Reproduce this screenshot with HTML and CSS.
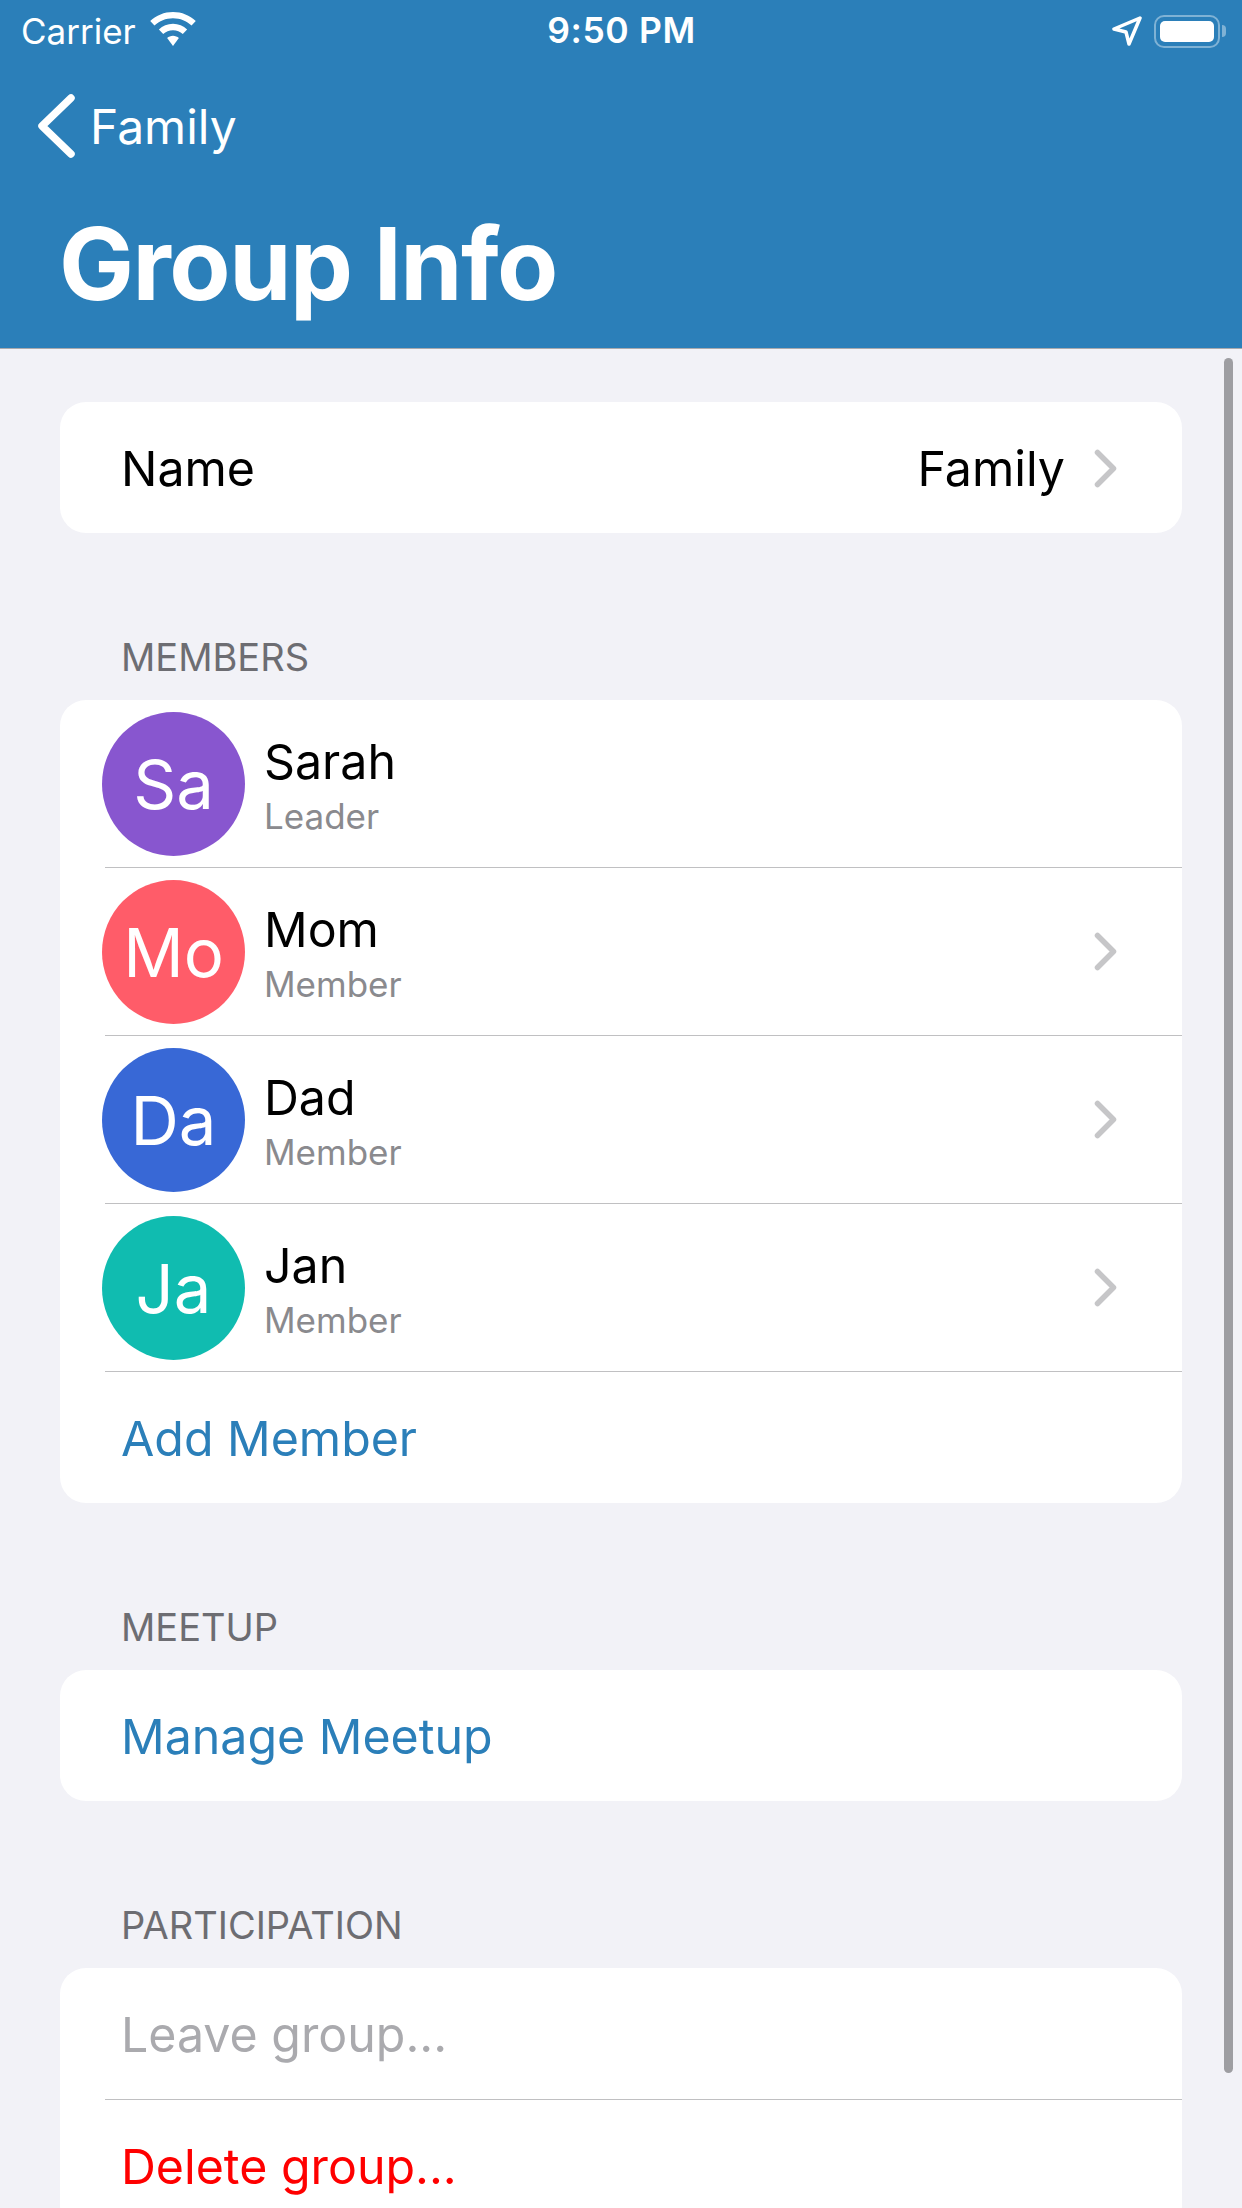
FILE: index.html
```html
<!DOCTYPE html>
<html lang="en">

<head>
    <meta charset="UTF-8">
    <meta name="viewport" content="width=device-width, initial-scale=1.0">
    <title>Group Info</title>
    <link rel="stylesheet" href="styles.css">
</head>

<body>
    <header class="header">
        <div class="status-bar">
            <div class="status-left">
                <span>Carrier</span>
                <svg class="wifi" viewBox="0 0 46 33" width="48" height="34">
                    <path d="M23 0C14.500 0 6.700 3.300 0.900 8.700L5 13.100C9.700 8.800 16 6.100 23 6.100S36.300 8.800 41 13.100L45.100 8.700C39.300 3.300 31.500 0 23 0Z" fill="#fff"/>
                    <path d="M23 11.500C17.700 11.500 12.900 13.600 9.300 16.900L13.500 21.400C16 19.100 19.300 17.700 23 17.700S30 19.100 32.500 21.400L36.700 16.900C33.100 13.600 28.300 11.500 23 11.500Z" fill="#fff"/>
                    <path d="M23 23C20.800 23 18.800 23.900 17.300 25.200L23 33L28.700 25.200C27.200 23.900 25.200 23 23 23Z" fill="#fff"/>
                </svg>
            </div>
            <span class="clock">9:50 PM</span>
            <div class="status-right">
                <svg class="arrow" viewBox="0 0 30 30" width="30" height="30">
                    <path d="M28 2L2 13L14 16L17 28Z" fill="none" stroke="#fff" stroke-width="3.500" stroke-linejoin="round"/>
                </svg>
                <div class="battery"><div class="battery-fill"></div></div>
                <div class="battery-nub"></div>
            </div>
        </div>
        <div class="nav-row">
            <svg class="back" viewBox="0 0 38 64" width="38" height="64">
                <path d="M34 4L5 32L34 60" fill="none" stroke="#fff" stroke-width="7.500" stroke-linecap="round" stroke-linejoin="round"/>
            </svg>
            <span>Family</span>
        </div>
        <h1 class="title">Group Info</h1>
    </header>

    <main class="content">
        <section class="card">
            <div class="row">
                <span class="row-text">Name</span>
                <span class="row-value">Family</span>
                <svg class="chevron" viewBox="0 0 23 39" width="23" height="39"><path d="M3.500 3.500L19.500 19.500L3.500 35.500" fill="none" stroke="#c6c6c8" stroke-width="5.500" stroke-linecap="round" stroke-linejoin="round"/></svg>
            </div>
        </section>

        <h2 class="section-label">MEMBERS</h2>
        <section class="card">
            <div class="member">
                <div class="avatar purple">Sa</div>
                <div class="member-info">
                    <div class="member-name">Sarah</div>
                    <div class="member-role">Leader</div>
                </div>
            </div>
            <div class="sep"></div>
            <div class="member">
                <div class="avatar red">Mo</div>
                <div class="member-info">
                    <div class="member-name">Mom</div>
                    <div class="member-role">Member</div>
                </div>
                <svg class="chevron" viewBox="0 0 23 39" width="23" height="39"><path d="M3.500 3.500L19.500 19.500L3.500 35.500" fill="none" stroke="#c6c6c8" stroke-width="5.500" stroke-linecap="round" stroke-linejoin="round"/></svg>
            </div>
            <div class="sep"></div>
            <div class="member">
                <div class="avatar blue">Da</div>
                <div class="member-info">
                    <div class="member-name">Dad</div>
                    <div class="member-role">Member</div>
                </div>
                <svg class="chevron" viewBox="0 0 23 39" width="23" height="39"><path d="M3.500 3.500L19.500 19.500L3.500 35.500" fill="none" stroke="#c6c6c8" stroke-width="5.500" stroke-linecap="round" stroke-linejoin="round"/></svg>
            </div>
            <div class="sep"></div>
            <div class="member">
                <div class="avatar teal">Ja</div>
                <div class="member-info">
                    <div class="member-name">Jan</div>
                    <div class="member-role">Member</div>
                </div>
                <svg class="chevron" viewBox="0 0 23 39" width="23" height="39"><path d="M3.500 3.500L19.500 19.500L3.500 35.500" fill="none" stroke="#c6c6c8" stroke-width="5.500" stroke-linecap="round" stroke-linejoin="round"/></svg>
            </div>
            <div class="sep"></div>
            <div class="row"><span class="row-text link">Add Member</span></div>
        </section>

        <h2 class="section-label">MEETUP</h2>
        <section class="card">
            <div class="row"><span class="row-text link">Manage Meetup</span></div>
        </section>

        <h2 class="section-label">PARTICIPATION</h2>
        <section class="card">
            <div class="row"><span class="row-text muted">Leave group...</span></div>
            <div class="sep"></div>
            <div class="row"><span class="row-text danger">Delete group...</span></div>
        </section>
    </main>

    <div class="scrollbar"></div>
</body>

</html>
```

FILE: styles.css
```css
/* Basic body styling */
body {
    font-family: Inter, "Noto Sans", sans-serif;
    width: 1242px;
    height: 2208px;
    margin: 0;
    overflow: hidden;
    position: relative;
    background-color: #f2f2f7;
    color: #000;
}

/* Blue header */
.header {
    height: 348px;
    background-color: #2b7fb9;
    border-bottom: 1px solid #a9a9ad;
    color: #fff;
}

.status-bar {
    height: 62px;
    padding: 0 16px 0 21px;
    display: flex;
    align-items: center;
    justify-content: space-between;
    font-size: 35px;
    line-height: 62px;
}

.status-left {
    width: 296px;
    display: flex;
    align-items: center;
    gap: 13px;
}

.wifi {
    margin-top: -4px;
}

.clock {
    font-weight: 600;
    font-size: 35.500px;
    letter-spacing: 0.600px;
}

.status-right {
    width: 300px;
    display: flex;
    align-items: center;
    justify-content: flex-end;
}

.arrow {
    margin-right: 12px;
}

.battery {
    width: 66px;
    height: 33px;
    box-sizing: border-box;
    padding: 4px;
    border: 2px solid rgba(255, 255, 255, 0.4);
    border-radius: 10px;
}

.battery-fill {
    height: 100%;
    background-color: #fff;
    border-radius: 5px;
}

.battery-nub {
    width: 4px;
    height: 12px;
    margin-left: 2px;
    background-color: rgba(255, 255, 255, 0.4);
    border-radius: 0 4px 4px 0;
}

.nav-row {
    height: 128px;
    padding-left: 37px;
    display: flex;
    align-items: center;
    gap: 15px;
    font-size: 48px;
}

.title {
    margin: 0;
    padding: 16px 0 0 59px;
    font-size: 100px;
    font-weight: 700;
    line-height: 116px;
    letter-spacing: -1.500px;
}

/* Scrolling list */
.content {
    padding-top: 53px;
}

.card {
    margin: 0 60px;
    background-color: #fff;
    border-radius: 26px;
    overflow: hidden;
}

.section-label {
    height: 167px;
    box-sizing: border-box;
    margin: 0;
    padding: 102px 0 0 121px;
    font-size: 38px;
    font-weight: 400;
    line-height: 44px;
    color: #6d6d72;
}

.row {
    height: 131px;
    box-sizing: border-box;
    padding: 2px 65px 0 61px;
    display: flex;
    align-items: center;
    font-size: 48.300px;
}

.row-text {
    flex: 1;
}

.row-value {
    margin-right: 29px;
}

.link {
    color: #2b7fb9;
}

.muted {
    color: #aaaaae;
}

.danger {
    color: #ff0000;
}

.sep {
    height: 1px;
    margin-left: 45px;
    background-color: #c0c0c2;
}

/* Member rows */
.member {
    height: 167px;
    padding: 0 65px 0 42px;
    display: flex;
    align-items: center;
}

.avatar {
    width: 143px;
    height: 144px;
    box-sizing: border-box;
    padding-top: 2px;
    flex-shrink: 0;
    border-radius: 50%;
    display: flex;
    align-items: center;
    justify-content: center;
    font-size: 67px;
    color: #fff;
}

.purple {
    background-color: #8856cf;
}

.red {
    background-color: #ff5c69;
}

.blue {
    background-color: #3868d6;
}

.teal {
    background-color: #10bcb0;
}

.member-info {
    flex: 1;
    margin-left: 19px;
    padding-top: 3px;
}

.member-name {
    font-size: 48.300px;
    line-height: 62px;
}

.member-role {
    font-size: 35px;
    line-height: 46px;
    color: #8a8a8e;
}

/* Scroll indicator, sits over the list */
.scrollbar {
    position: absolute;
    top: 358px;
    left: 1224px;
    width: 9px;
    height: 1715px;
    background-color: #9e9ea2;
    border-radius: 5px;
}
```
